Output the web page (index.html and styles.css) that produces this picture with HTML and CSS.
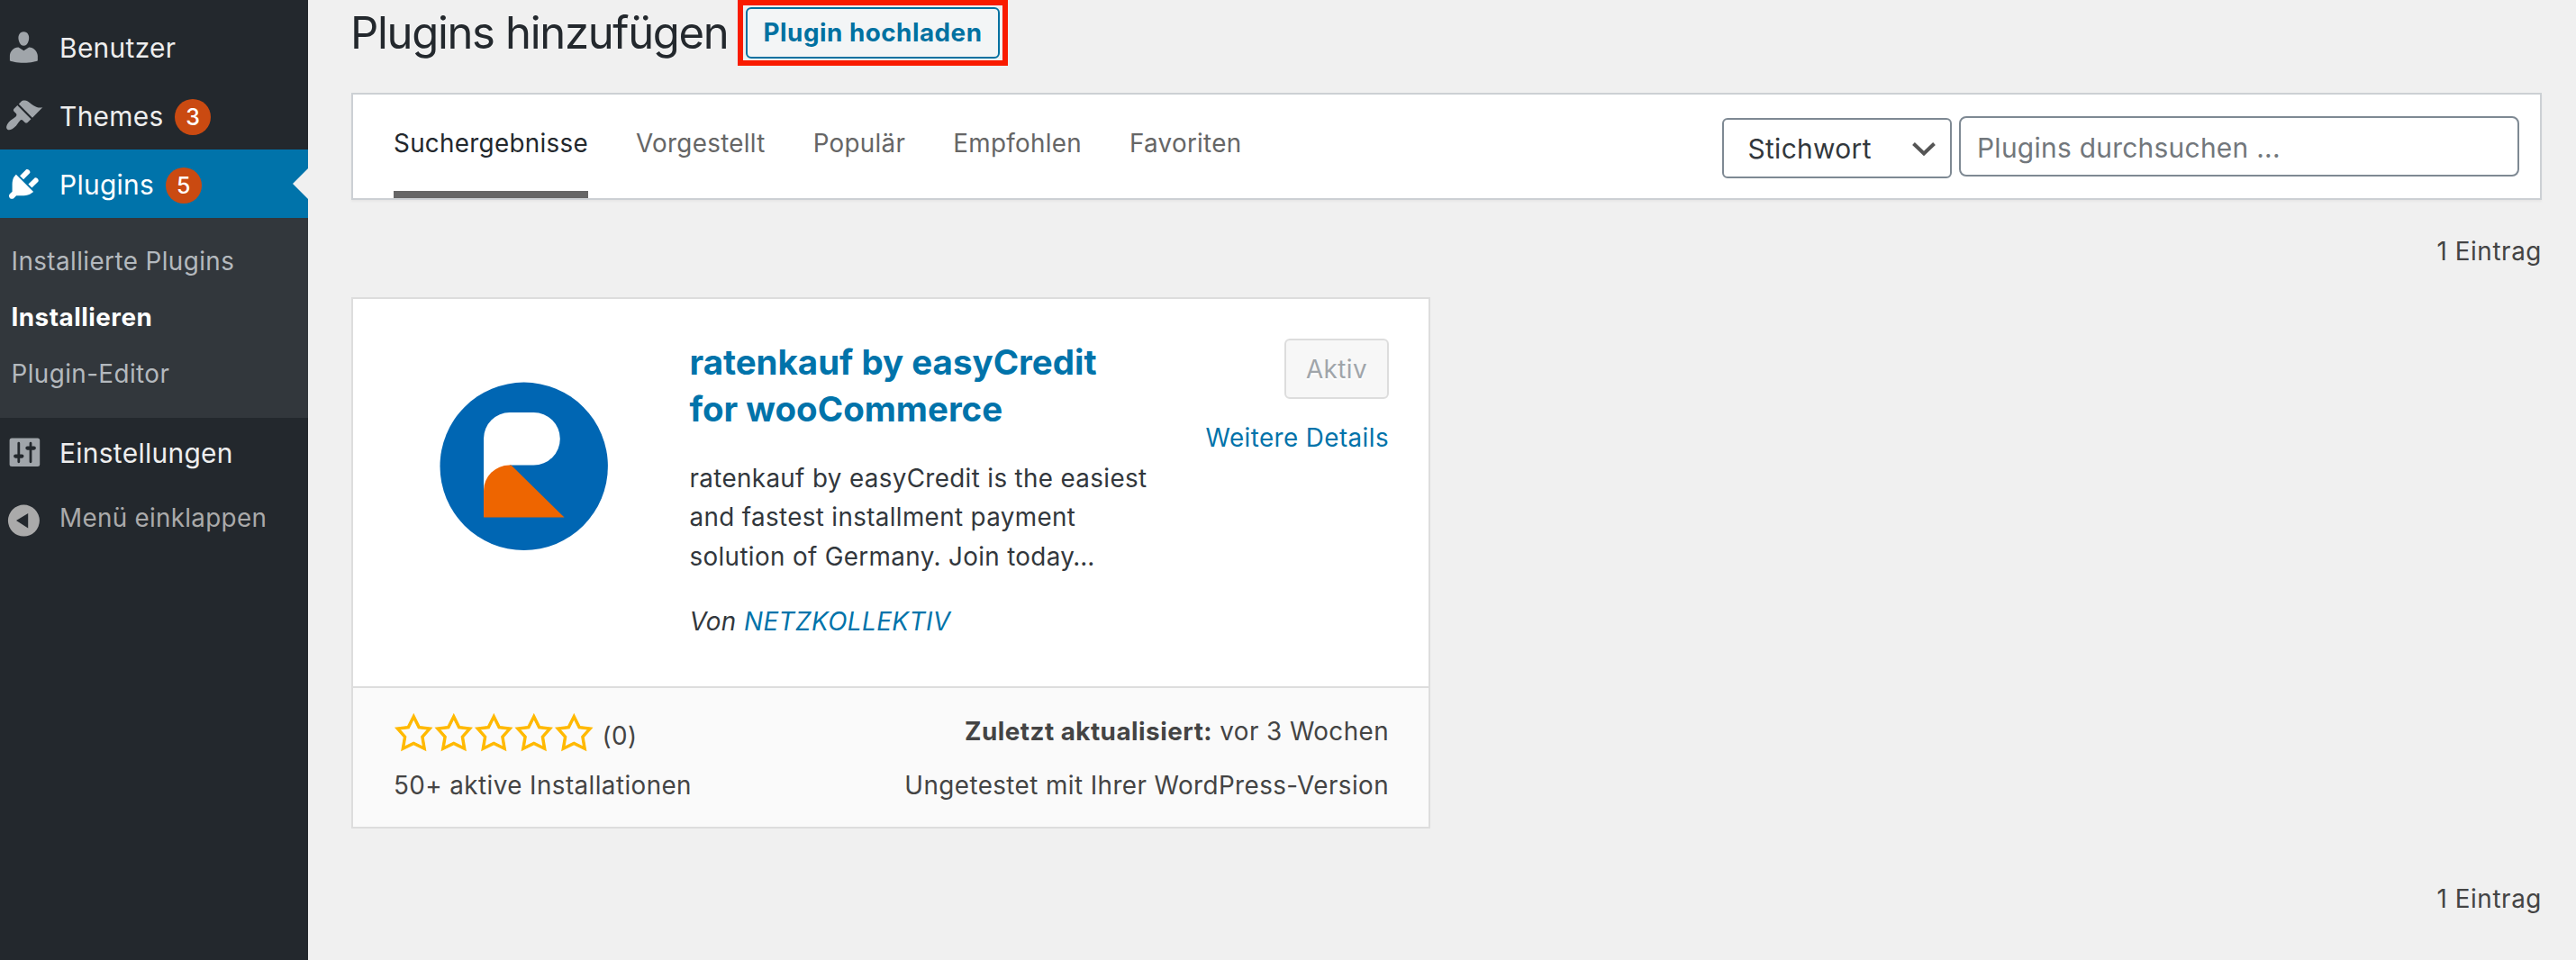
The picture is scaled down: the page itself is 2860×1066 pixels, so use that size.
FILE: index.html
```html
<!DOCTYPE html>
<html lang="de">
<head>
<meta charset="utf-8">
<title>Plugins hinzufügen</title>
<link rel="stylesheet" href="styles.css">
</head>
<body>
<nav class="sidebar">
  <a class="item"><svg class="icon" viewBox="0 0 20 20"><path d="M10 9.25c-2.27 0-2.73-3.44-2.73-3.44C7 4.02 7.82 2 9.97 2c2.16 0 2.98 2.02 2.71 3.81 0 0-.41 3.44-2.68 3.44zm0 2.57L12.72 10c2.39 0 4.52 2.33 4.52 4.53v2.49s-3.65 1.13-7.24 1.13c-3.65 0-7.24-1.13-7.24-1.13v-2.49c0-2.25 1.94-4.48 4.47-4.48z"/></svg><span class="label">Benutzer</span></a>
  <a class="item"><svg class="icon" viewBox="0 0 20 20"><path d="M14.48 11.06L7.41 3.99l1.5-1.5c.5-.56 2.3-.47 3.51.32 1.21.8 1.43 1.28 2.91 2.1 1.18.64 2.45 1.26 4.45.85zm-.71.71L6.7 4.7 4.93 6.47c-.39.39-.39 1.02 0 1.41l1.06 1.06c.39.39.39 1.03 0 1.42-.6.6-1.43 1.11-2.21 1.69-.35.26-.7.53-1.01.84C1.43 14.23.4 16.08 1.4 17.07c.99 1 2.84-.03 4.18-1.36.31-.31.58-.66.85-1.02.57-.78 1.08-1.61 1.69-2.21.39-.39 1.02-.39 1.41 0l1.06 1.06c.39.39 1.02.39 1.41 0z"/></svg><span class="label">Themes</span><span class="count">3</span></a>
  <a class="item current"><svg class="icon" viewBox="0 0 20 20"><path d="M13.11 4.36L9.87 7.6 8 5.73l3.24-3.24c.35-.34 1.05-.2 1.56.32.52.51.66 1.21.31 1.55zm-8 1.77l.91-1.12 9.01 9.01-1.19.84c-.71.71-2.63 1.16-3.82 1.16H6.14L4.9 17.26c-.59.59-1.54.59-2.12 0-.59-.58-.59-1.53 0-2.12l1.24-1.24v-3.88c0-1.13.4-3.19 1.09-3.89zm7.26 3.97l3.24-3.24c.34-.35 1.04-.21 1.55.31.52.51.66 1.21.31 1.55l-3.24 3.25z"/></svg><span class="label">Plugins</span><span class="count">5</span></a>
  <div class="submenu">
    <a>Installierte Plugins</a>
    <a class="active">Installieren</a>
    <a>Plugin-Editor</a>
  </div>
  <a class="item"><svg class="icon" viewBox="0 0 42.75 42.75"><rect x="5.6" y="5.4" width="33.6" height="31.6" rx="2.5"/><g class="sliders"><path d="M15.8 11.2v20.6M29 11.2v20.6" stroke-width="2.8"/><path d="M12.2 25.6h7.2M25.4 16.6h7.4" stroke-width="4.2"/></g></svg><span class="label">Einstellungen</span></a>
  <a class="item collapse"><svg class="icon" viewBox="0 0 42.75 42.75"><path fill-rule="evenodd" d="M21.4 5.6a17.5 17.5 0 1 0 0 35a17.5 17.5 0 1 0 0-35zM26.2 14.9v16.5L13 23.1z"/></svg><span class="label">Menü einklappen</span></a>
</nav>
<main class="main">
  <header class="head">
    <h1>Plugins hinzufügen</h1>
    <div class="highlight"><a class="upload">Plugin hochladen</a></div>
  </header>
  <section class="filter">
    <div class="tabs">
      <a class="active">Suchergebnisse</a><a>Vorgestellt</a><a>Populär</a><a>Empfohlen</a><a>Favoriten</a>
    </div>
    <div class="search">
      <div class="select"><span>Stichwort</span><svg width="28" height="18" viewBox="0 0 28 18"><path d="M2.5 3.5L14 14.5L25.500 3.500" fill="none" stroke="#555" stroke-width="4"/></svg></div>
      <input type="text" placeholder="Plugins durchsuchen ...">
    </div>
  </section>
  <p class="total">1 Eintrag</p>
  <article class="card">
    <div class="card-top">
      <svg class="logo" viewBox="0 0 188 188"><circle cx="93.700" cy="93.800" r="93.200" fill="#0066b3"/><path fill="#fff" d="M49 150V63a29 29 0 0 1 29-29h26.500a29.300 29.300 0 0 1 0 58.600H78z"/><path fill="#ee6500" d="M49 150.500V121a28.500 28.500 0 0 1 28.500-28.500h2L138.500 150.500z"/></svg>
      <div class="info">
        <h3>ratenkauf by easyCredit<br>for wooCommerce</h3>
        <p>ratenkauf by easyCredit is the easiest<br>and fastest installment payment<br>solution of Germany. Join today…</p>
        <p class="author">Von <a>NETZKOLLEKTIV</a></p>
      </div>
      <div class="actions">
        <span class="button">Aktiv</span>
        <a>Weitere Details</a>
      </div>
    </div>
    <div class="card-bottom">
      <div>
        <div class="rating">
          <svg class="stars" viewBox="0 0 100 20"><defs><path id="star" d="M10 1L7 7l-6 .75 4.130 4.620L4 19l6-3 6 3-1.120-6.630L19 7.750 13 7zm0 2.240l2.340 4.690 4.650.580-3.180 3.560.870 5.150L10 14.880l-4.680 2.340.870-5.150-3.180-3.560 4.650-.580z"/></defs><use href="#star"/><use href="#star" x="20"/><use href="#star" x="40"/><use href="#star" x="60"/><use href="#star" x="80"/></svg>
          <span>(0)</span>
        </div>
        <div>50+ aktive Installationen</div>
      </div>
      <div class="right">
        <div><strong>Zuletzt aktualisiert:</strong> vor 3 Wochen</div>
        <div>Ungetestet mit Ihrer WordPress-Version</div>
      </div>
    </div>
  </article>
  <p class="total bottom">1 Eintrag</p>
</main>
</body>
</html>
```
FILE: styles.css
```css
* { box-sizing: border-box; }
body {
  margin: 0;
  display: flex;
  height: 1066px;
  overflow: hidden;
  background: #f0f0f0;
  color: #444;
  font: 27.8px "Inter", sans-serif;
  letter-spacing: .42px;
}
h1, h3, p { margin: 0; }
a { color: #0073aa; text-decoration: none; }
strong { font-weight: 700; letter-spacing: .5px; }

.sidebar { width: 342px; flex: none; padding-top: 14px; background: #23282d; }
.item {
  display: flex;
  align-items: center;
  height: 76px;
  padding-left: 4.6px;
  color: #eee;
  font-size: 29.9px;
  letter-spacing: .3px;
}
.icon { width: 42.75px; height: 42.75px; margin-right: 18.7px; fill: #a0a5aa; overflow: visible; }
.sliders { stroke: #23282d; stroke-linecap: round; }
.label { padding-top: 1px; }
.count {
  width: 40px;
  height: 40px;
  margin: 4px 0 0 12.5px;
  border-radius: 50%;
  background: #ca4a11;
  color: #fff;
  font-size: 25px;
  font-weight: 500;
  line-height: 40px;
  letter-spacing: 0;
  text-align: center;
}
.current { background: #0073aa; color: #fff; }
.current .icon { fill: #fff; }
.current::after {
  content: "";
  margin-left: auto;
  border: solid transparent;
  border-width: 17px 17px 17px 0;
  border-right-color: #f0f0f0;
}
.submenu { height: 222px; padding: 16.5px 0 0 12.5px; background: #32373c; }
.submenu a { display: block; line-height: 62.5px; color: #b4b9be; }
.submenu .active { color: #fff; font-weight: 700; letter-spacing: .5px; }
.collapse { height: 72px; color: #aaa; font-size: 27.8px; }
.collapse .icon { fill: #aaa; }
.collapse .label { padding-top: 0; margin-top: -2px; }

.main { flex: 1; padding: 0 38px 0 48px; }
.head { display: flex; height: 73px; align-items: center; }
h1 {
  width: 430px;
  margin-left: -1px;
  color: #23282d;
  font-size: 49px;
  font-weight: 400;
  letter-spacing: -1.32px;
  white-space: nowrap;
}
.highlight { width: 300px; height: 73px; padding: 2px 3px; border: 6px solid #f91b00; }
.upload {
  display: block;
  height: 57px;
  border: 2px solid #0071a1;
  border-radius: 6px;
  background: #f3f5f6;
  color: #0071a1;
  font-weight: 700;
  letter-spacing: .5px;
  line-height: 53px;
  text-align: center;
}

.filter {
  display: flex;
  justify-content: space-between;
  height: 119px;
  margin-top: 30px;
  padding: 0 23px 0 45px;
  border: 2px solid #ccd0d4;
  background: #fff;
  box-shadow: 0 2px 2px rgba(0, 0, 0, .04);
}
.tabs { display: flex; gap: 53px; letter-spacing: .3px; }
.tabs a { height: 115px; border-bottom: 8px solid transparent; line-height: 109px; color: #666; }
.tabs .active { border-color: #666; color: #23282d; }
.search { display: flex; gap: 8px; padding-top: 24px; }
.select {
  display: flex;
  align-items: center;
  justify-content: space-between;
  width: 255px;
  height: 67px;
  margin-top: 2px;
  padding: 0 15px 0 26.5px;
  border: 2px solid #7e8993;
  border-radius: 6px;
  color: #32373c;
  font-size: 29.9px;
  letter-spacing: .33px;
}
input {
  width: 622px;
  height: 67px;
  padding: 3px 18px 0;
  border: 2px solid #7e8993;
  border-radius: 8px;
  background: #fff;
  font: 29.9px "Inter", sans-serif;
  letter-spacing: .28px;
}
input::placeholder { color: #72777c; opacity: 1; }

.total { margin-top: 37px; line-height: 40px; text-align: right; letter-spacing: .6px; }
.total.bottom { margin-top: 58px; }

.card { width: 1198px; height: 590px; margin-top: 31px; border: 2px solid #ddd; background: #fff; }
.card-top { display: flex; height: 432px; padding: 44px 44px 0 96px; border-bottom: 2px solid #ddd; }
.logo { width: 188px; height: 188px; margin: 47.5px 89.5px 0 0; }
.info { width: 518px; color: #32373c; line-height: 43.33px; white-space: nowrap; letter-spacing: .35px; }
h3 {
  margin: 0 0 30px;
  color: #0073aa;
  font-size: 38.5px;
  font-weight: 700;
  letter-spacing: -.02px;
  line-height: 52px;
}
.author { margin-top: 29px; font-style: italic; letter-spacing: .45px; }
.actions { display: flex; flex: 1; flex-direction: column; align-items: flex-end; gap: 23px; line-height: 40px; }
.button {
  width: 116px;
  height: 67px;
  border: 2px solid #ddd;
  border-radius: 6px;
  background: #f7f7f7;
  color: #a0a5aa;
  line-height: 65px;
  text-align: center;
  text-shadow: 0 2px 0 #fff;
}
.card-bottom {
  display: flex;
  justify-content: space-between;
  height: 154px;
  padding: 18px 44px 0 45px;
  background: #fafafa;
  line-height: 60px;
}
.right { text-align: right; }
.rating { display: flex; align-items: center; height: 60px; }
.rating span { padding-top: 9px; }
.stars { width: 222.5px; height: 44.5px; margin: 2px 9px 0 0; fill: #ffb900; stroke: #ffb900; stroke-width: .55; }
```
